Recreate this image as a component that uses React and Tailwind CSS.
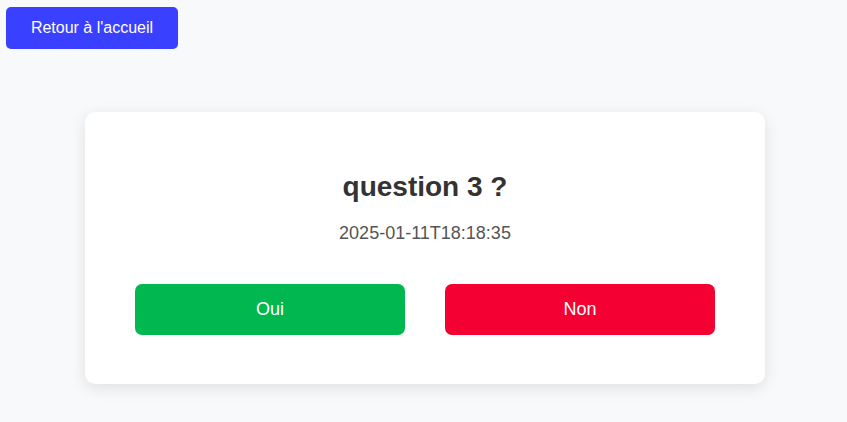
export default function App() {
  return (
    <div className="min-h-[422px] w-full bg-[#f8f9fb] [font-family:'Liberation_Sans',Arial,sans-serif]">
      <div className="pt-[7px] pl-[6px]">
        <button className="flex h-[42px] w-[172px] items-center justify-center rounded-[5px] bg-[#3a40ff] text-[16px] text-white">
          Retour à l'accueil
        </button>
      </div>
      <div className="mx-[85px] mt-[63px] flex h-[272px] w-[680px] flex-col items-center rounded-[10px] bg-white px-[50px] pt-[59px] shadow-[0_4px_16px_rgba(0,0,0,0.1)]">
        <h1 className="h-[32px] text-[28px] font-bold leading-[32px] text-[#333333]">question 3 ?</h1>
        <p className="mt-[20px] h-[21px] text-[18px] leading-[21px] text-[#555555]">2025-01-11T18:18:35</p>
        <div className="mt-[40px] flex w-full gap-[40px]">
          <button className="flex h-[51px] flex-1 items-center justify-center rounded-[7px] bg-[#00b84f] text-[18px] text-white">Oui</button>
          <button className="flex h-[51px] flex-1 items-center justify-center rounded-[7px] bg-[#f50032] text-[18px] text-white">Non</button>
        </div>
      </div>
    </div>
  );
}
